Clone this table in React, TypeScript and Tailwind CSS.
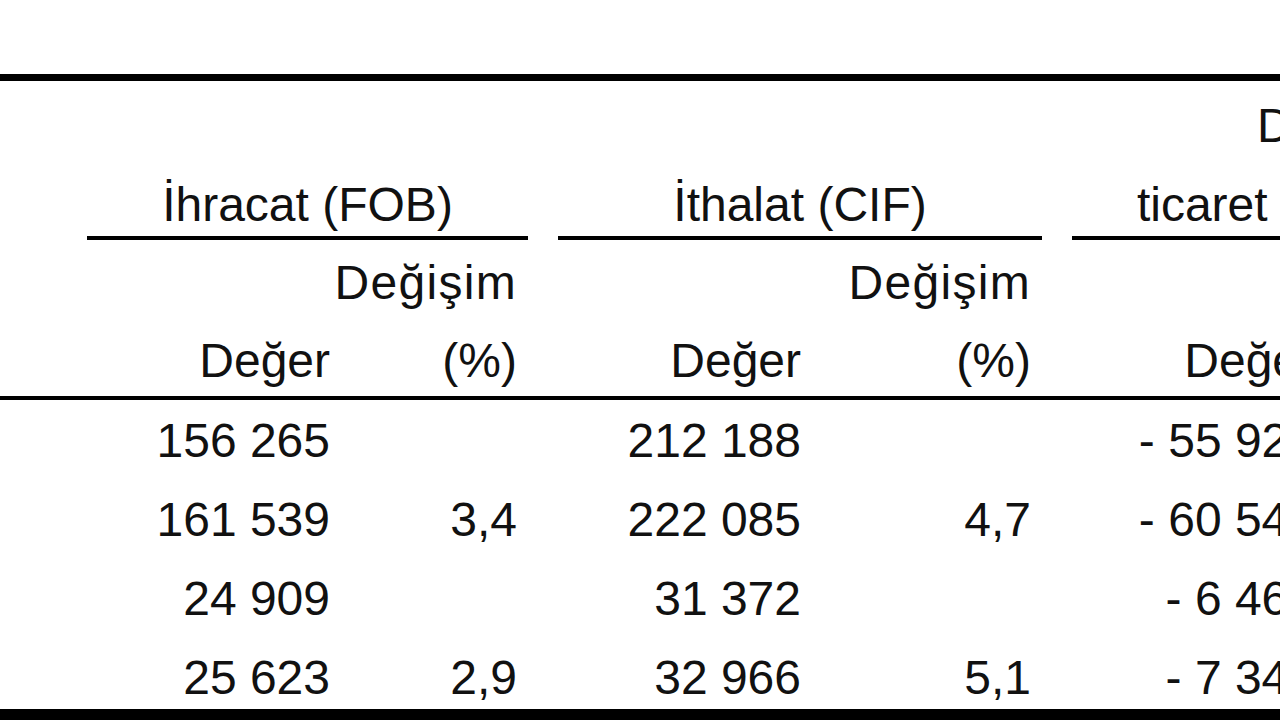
const font = { fontFamily: '"Liberation Sans", Arial, sans-serif' }

const cols = "grid grid-cols-[72px_284px_187px_284px_230px_284px_188px]"

const rows = [
  ["156 265", "", "212 188", "", "- 55 923"],
  ["161 539", "3,4", "222 085", "4,7", "- 60 546"],
  ["24 909", "", "31 372", "", "- 6 463"],
  ["25 623", "2,9", "32 966", "5,1", "- 7 343"],
]

function Cell({ children }: { children?: React.ReactNode }) {
  return <div className="flex justify-end pr-[26px] leading-[48px] whitespace-nowrap">{children}</div>
}

function Group({ lines }: { lines: string[] }) {
  return (
    <div className="col-span-2 px-[15px]">
      <div className="h-full border-b-[4px] border-black flex flex-col justify-end items-center gap-[31px] pb-[7px]">
        {lines.map((l) => (
          <div key={l} className="leading-[48px] whitespace-nowrap">
            {l}
          </div>
        ))}
      </div>
    </div>
  )
}

export default function App() {
  return (
    <div className="w-[1280px] h-[720px] overflow-hidden bg-white text-[48px] text-[#111]" style={font}>
      <div className="h-[74px]" />
      <div className="w-[1529px]">
        <div className="border-t-[7px] border-b-[4px] border-black">
          <div className={`${cols} h-[159px]`}>
            <div />
            <Group lines={["İhracat (FOB)"]} />
            <Group lines={["İthalat (CIF)"]} />
            <Group lines={["Dış", "ticaret dengesi"]} />
          </div>
          <div className={`${cols} h-[79px] pt-[19px]`}>
            <div />
            <Cell />
            <Cell>
              <span className="tracking-[1.3px]">Değişim</span>
            </Cell>
            <Cell />
            <Cell>
              <span className="tracking-[1.3px]">Değişim</span>
            </Cell>
            <Cell />
            <Cell />
          </div>
          <div className={`${cols} h-[77px] pt-[18px]`}>
            <div />
            <Cell>Değer</Cell>
            <Cell>(%)</Cell>
            <Cell>Değer</Cell>
            <Cell>(%)</Cell>
            <Cell>Değer</Cell>
            <Cell />
          </div>
        </div>
        <div className="border-b-[11px] border-black">
          {rows.map((r, i) => (
            <div key={i} className={`${cols} ${i === 3 ? "h-[72px]" : "h-[79px]"} pt-[17px]`}>
              <div />
              {r.map((v, j) => (
                <Cell key={j}>{v}</Cell>
              ))}
              <Cell />
            </div>
          ))}
        </div>
      </div>
    </div>
  )
}
